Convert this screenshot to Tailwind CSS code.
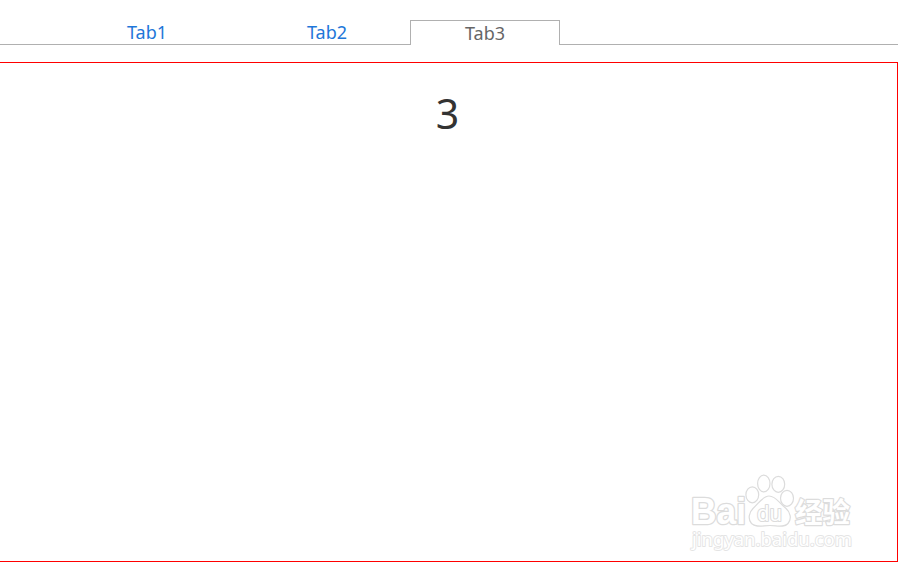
<!DOCTYPE html>
<html lang="zh-CN">
<head>
    <meta charset="UTF-8">
    <meta name="viewport" content="width=device-width, initial-scale=1.0">
    <title>Tab</title>
    <script src="https://cdn.jsdelivr.net/npm/@tailwindcss/browser@4"></script>
</head>
<body class="bg-white font-['Noto_Sans','Noto_Sans_CJK_SC',sans-serif] overflow-hidden">
    <div class="w-[898px] pt-5">
        <!-- Tabs -->
        <ul class="flex h-[25px] text-[18px] leading-6 text-center">
            <li class="w-[72px] border-b border-[#b0b0b0]"></li>
            <li class="w-[150px] border-b border-[#b0b0b0]"><a href="#" class="text-[#1e77d9]">Tab1</a></li>
            <li class="w-[30px] border-b border-[#b0b0b0]"></li>
            <li class="w-[150px] border-b border-[#b0b0b0]"><a href="#" class="text-[#1e77d9]">Tab2</a></li>
            <li class="w-2 border-b border-[#b0b0b0]"></li>
            <li class="w-[150px] border border-b-0 border-[#b0b0b0]"><a href="#" class="text-[#666]">Tab3</a></li>
            <li class="flex-1 border-b border-[#b0b0b0]"></li>
        </ul>

        <!-- Content -->
        <div class="relative mt-[17px] h-[500px] border border-l-0 border-[#f00] pt-[22px] pr-[2px] text-center text-[41px] leading-[56px] text-[#333]">
            3
            <svg class="absolute right-[37px] bottom-[6px] w-[175px] h-[85px]" viewBox="685 470 175 85" fill="#fff" stroke="#dcdcdc" stroke-width="1.2" stroke-linejoin="round">
                <text x="691" y="524" font-family="Liberation Sans" font-weight="bold" font-size="36" textLength="55" lengthAdjust="spacingAndGlyphs" stroke-width="2.6" paint-order="stroke">Bai</text>
                <ellipse cx="752.3" cy="494.8" rx="6.4" ry="8"/>
                <ellipse cx="763.8" cy="483.5" rx="6.2" ry="8.4"/>
                <ellipse cx="778.3" cy="484.3" rx="6.4" ry="8"/>
                <ellipse cx="787" cy="498.3" rx="6.5" ry="8"/>
                <path d="M769 496C763 496 759 503 753.5 508C749 512 747.5 519 751.5 523.5C756 528 763 525.5 770 525.5C777 525.5 784 528 788 523.5C792 519 790.5 512 785.5 508C779 503 776 496 769 496Z"/>
                <text x="757" y="521" font-family="Noto Sans" font-size="21" textLength="25" lengthAdjust="spacingAndGlyphs" stroke-width="2.2" paint-order="stroke">du</text>
                <text x="795" y="522.5" font-family="Noto Sans CJK SC" font-weight="700" font-size="28" textLength="55" lengthAdjust="spacingAndGlyphs" stroke-width="2.4" paint-order="stroke">经验</text>
                <text x="692" y="545.5" font-family="Noto Sans" font-size="18" textLength="160" lengthAdjust="spacingAndGlyphs" stroke="#e4e4e4" stroke-width="1.8" paint-order="stroke">jingyan.baidu.com</text>
            </svg>
        </div>
    </div>
</body>
</html>
